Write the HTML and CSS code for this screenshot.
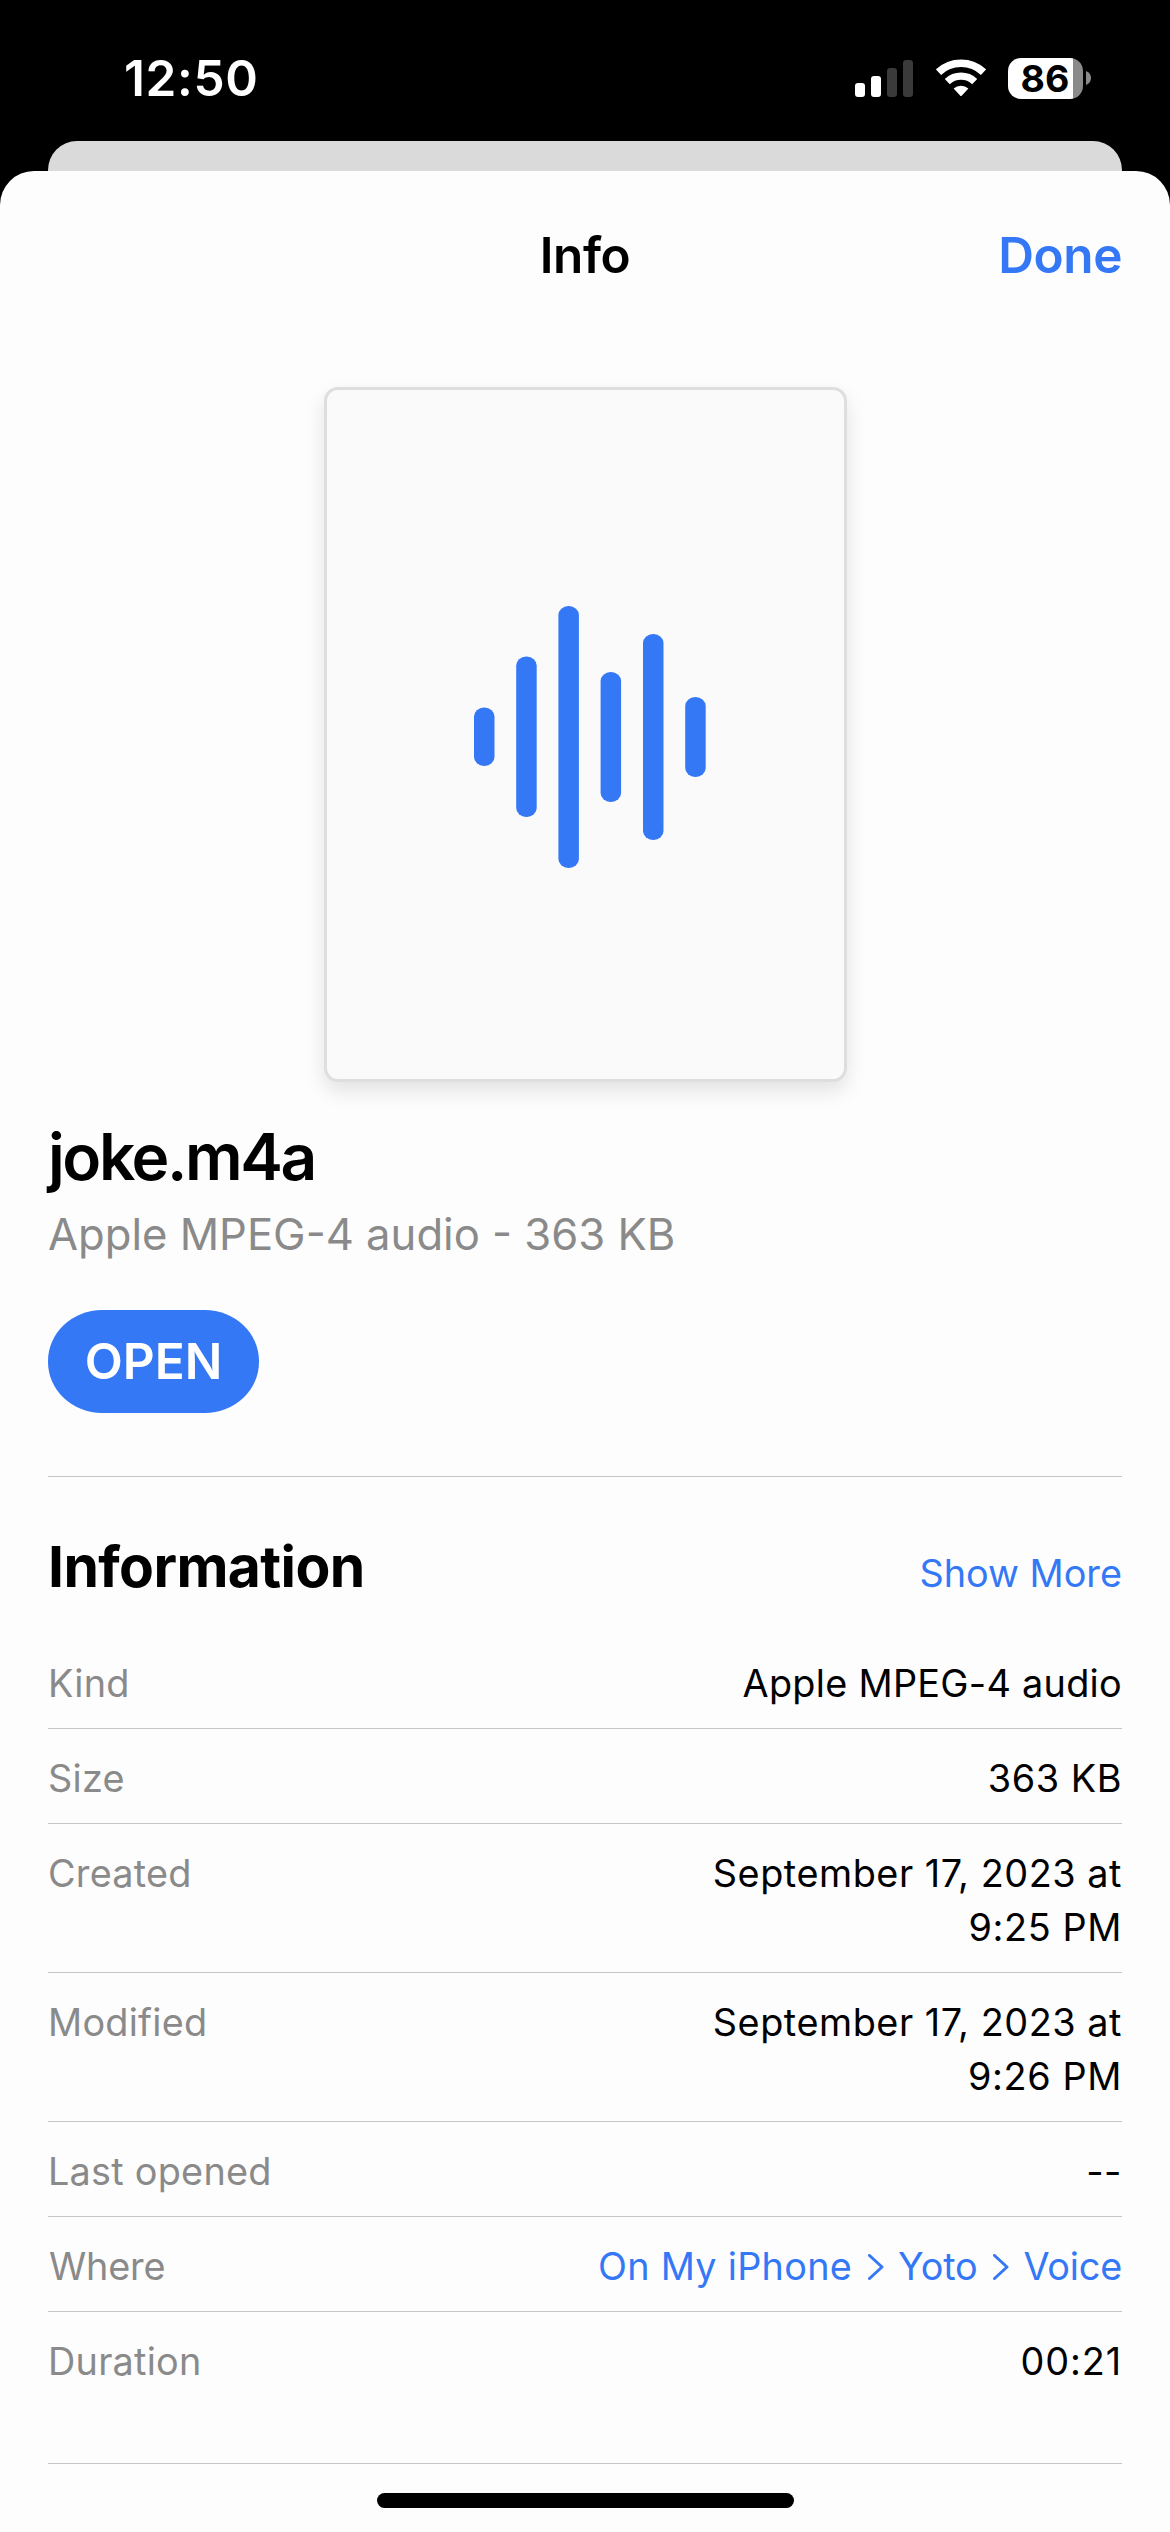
FILE: index.html
```
<!DOCTYPE html>
<html lang="en">
<head>
<meta charset="utf-8">
<title>Info</title>
<link rel="stylesheet" href="styles.css">
</head>
<body>
<div class="status">
  <span class="clock">12:50</span>
  <div class="indicators">
    <svg class="signal" width="58" height="37" viewBox="0 0 58 37">
      <g fill="#fff"><rect x="0" y="23" width="10" height="14" rx="3"/><rect x="16" y="16" width="10" height="21" rx="3"/></g>
      <g fill="#3a3a3a"><rect x="32" y="8" width="10" height="29" rx="3"/><rect x="48" y="0" width="10" height="37" rx="3"/></g>
    </svg>
    <svg class="wifi" width="50" height="38" viewBox="0 0 50 38">
      <g fill="none" stroke="#fff">
        <path stroke-width="7.6" d="M2.5 13.1A33 33 0 0 1 47.5 13.1"/>
        <path stroke-width="7.4" d="M11.3 22.6A20 20 0 0 1 38.7 22.6"/>
      </g>
      <path fill="#fff" d="M17.6 29.6A11 11 0 0 1 32.4 29.6L25.9 36.4Q25 37.4 24.1 36.4Z"/>
    </svg>
    <div class="battery">86</div>
    <svg class="battery-tip" width="5" height="14" viewBox="0 0 5 14"><path fill="#8a8a8a" d="M0 0Q5 2 5 7T0 14Z"/></svg>
  </div>
</div>
<div class="back-sheet"></div>
<main class="sheet">
  <header class="nav">
    <span class="nav-title">Info</span>
    <a class="done">Done</a>
  </header>
  <div class="preview">
    <svg width="212" height="264" viewBox="0 0 212 264" fill="#3478f6">
      <rect x="0" y="102.5" width="20.5" height="58.5" rx="10" ry="9"/>
      <rect x="42.2" y="51.5" width="20.5" height="160.5" rx="10" ry="9"/>
      <rect x="84.4" y="1" width="20.5" height="262" rx="10" ry="9"/>
      <rect x="126.6" y="67" width="20.5" height="130" rx="10" ry="9"/>
      <rect x="169" y="29" width="20.5" height="206" rx="10" ry="9"/>
      <rect x="211.2" y="92" width="20.5" height="80" rx="10" ry="9"/>
    </svg>
  </div>
  <h1 class="name">joke.m4a</h1>
  <p class="summary">Apple MPEG-4 audio - 363 KB</p>
  <button class="open">OPEN</button>
  <section class="info">
    <div class="info-head">
      <h2 class="info-title">Information</h2>
      <a class="more">Show More</a>
    </div>
    <dl class="list">
      <div class="row"><dt>Kind</dt><dd>Apple MPEG-4 audio</dd></div>
      <div class="row"><dt>Size</dt><dd class="mid">363 KB</dd></div>
      <div class="row"><dt>Created</dt><dd class="mid">September 17, 2023 at<br><span class="time">9:25 PM</span></dd></div>
      <div class="row"><dt>Modified</dt><dd class="mid">September 17, 2023 at<br><span class="time">9:26 PM</span></dd></div>
      <div class="row"><dt>Last opened</dt><dd class="dashes">--</dd></div>
      <div class="row"><dt class="where">Where</dt>
        <dd class="path">
          <span>On My iPhone</span>
          <svg class="chev" width="16" height="26" viewBox="0 0 16 26"><path d="M1.5 1.5L14 13L1.5 24.5"/></svg>
          <span class="dir">Yoto</span>
          <svg class="chev" width="16" height="26" viewBox="0 0 16 26"><path d="M1.5 1.5L14 13L1.5 24.5"/></svg>
          <span class="dir">Voice</span>
        </dd>
      </div>
      <div class="row"><dt>Duration</dt><dd class="duration">00:21</dd></div>
    </dl>
  </section>
  <div class="home"></div>
</main>
</body>
</html>
```
FILE: styles.css
```
* { box-sizing: border-box; margin: 0; padding: 0; }

body {
  width: 1170px;
  height: 2532px;
  overflow: hidden;
  background: #000;
  color: #000;
  font-family: Inter, "Liberation Sans", sans-serif;
}

svg { display: block; flex: none; }

.status {
  display: flex;
  justify-content: space-between;
  align-items: flex-start;
  height: 141px;
  padding: 48px 79px 0 124px;
  color: #fff;
}
.clock { font-size: 49.5px; font-weight: 600; line-height: 60px; letter-spacing: 0.65px; }
.indicators { display: flex; align-items: center; height: 60px; }
.wifi { margin-left: 22.5px; }
.battery {
  width: 75px;
  height: 41px;
  margin-left: 22.5px;
  padding-left: 12.5px;
  border-radius: 13px;
  background: linear-gradient(90deg, #fff 65px, #8a8a8a 65px);
  color: #000;
  font-size: 37.5px;
  font-weight: 700;
  line-height: 41px;
}
.battery-tip { margin-left: 3px; }

.back-sheet {
  height: 30px;
  margin: 0 48px;
  border-radius: 29px 29px 0 0;
  background: #dadada;
}

.sheet {
  height: 2361px;
  padding: 0 48px;
  border-radius: 34px 34px 0 0;
  background: #fdfdfd;
}

.nav {
  display: grid;
  grid-template-columns: 1fr auto 1fr;
  align-items: center;
  height: 168px;
  font-size: 49.5px;
  font-weight: 600;
  line-height: 60px;
  letter-spacing: -0.4px;
}
.nav-title { grid-column: 2; }
.done { color: #3478f6; text-align: right; }

.preview {
  display: flex;
  align-items: center;
  width: 523px;
  height: 695px;
  margin: 48px auto 0;
  padding: 5px 0 0 147px;
  border: 3px solid #dedede;
  border-radius: 14px;
  background: #fafafa;
  box-shadow: 0 9px 20px rgba(0, 0, 0, 0.11);
}
.preview svg { overflow: visible; }

.name {
  margin: 36px 0 0;
  font-size: 64px;
  font-weight: 600;
  line-height: 78px;
  letter-spacing: -2.4px;
}
.summary {
  margin: 12px 0 0;
  color: #8a8a8a;
  font-size: 43.6px;
  line-height: 54px;
}
.open {
  display: block;
  width: 211px;
  height: 103px;
  margin-top: 48px;
  border: 0;
  border-radius: 54px / 51px;
  background: #3478f6;
  color: #fff;
  font: 600 49.5px/103px Inter, sans-serif;
}

.info {
  margin-top: 63px;
  padding: 60px 0 57px;
  border-top: 1px solid #c6c6c8;
  border-bottom: 1px solid #c6c6c8;
}
.info-head { display: flex; justify-content: space-between; align-items: baseline; height: 60px; }
.info-title { font-size: 57px; font-weight: 700; line-height: 60px; letter-spacing: -0.62px; }
.more { color: #3478f6; font-size: 37.8px; line-height: 54px; }

.list { margin-top: 37px; font-size: 37.8px; line-height: 54px; }
.row {
  display: flex;
  justify-content: space-between;
  padding: 22px 0 18px;
  border-bottom: 1px solid #c6c6c8;
}
.row:last-child { border-bottom: 0; }
dt { color: #8a8a8a; letter-spacing: 0.25px; }
dt.where { padding-left: 1px; letter-spacing: -0.2px; }
dd { text-align: right; letter-spacing: 0.28px; }
dd.mid { letter-spacing: 0.55px; }
.time { letter-spacing: 0.6px; }
dd.duration { letter-spacing: 0.9px; }
dd.dashes { letter-spacing: 0.5px; }
dd.path { display: flex; align-items: center; color: #3478f6; }
.dir { letter-spacing: -0.2px; }
.chev { margin: 2px 14px 0 16px; fill: none; stroke: #3478f6; stroke-width: 3; stroke-linecap: round; stroke-linejoin: round; }

.home {
  width: 417px;
  height: 15px;
  margin: 29px auto 0;
  border-radius: 8px;
  background: #000;
}
```
